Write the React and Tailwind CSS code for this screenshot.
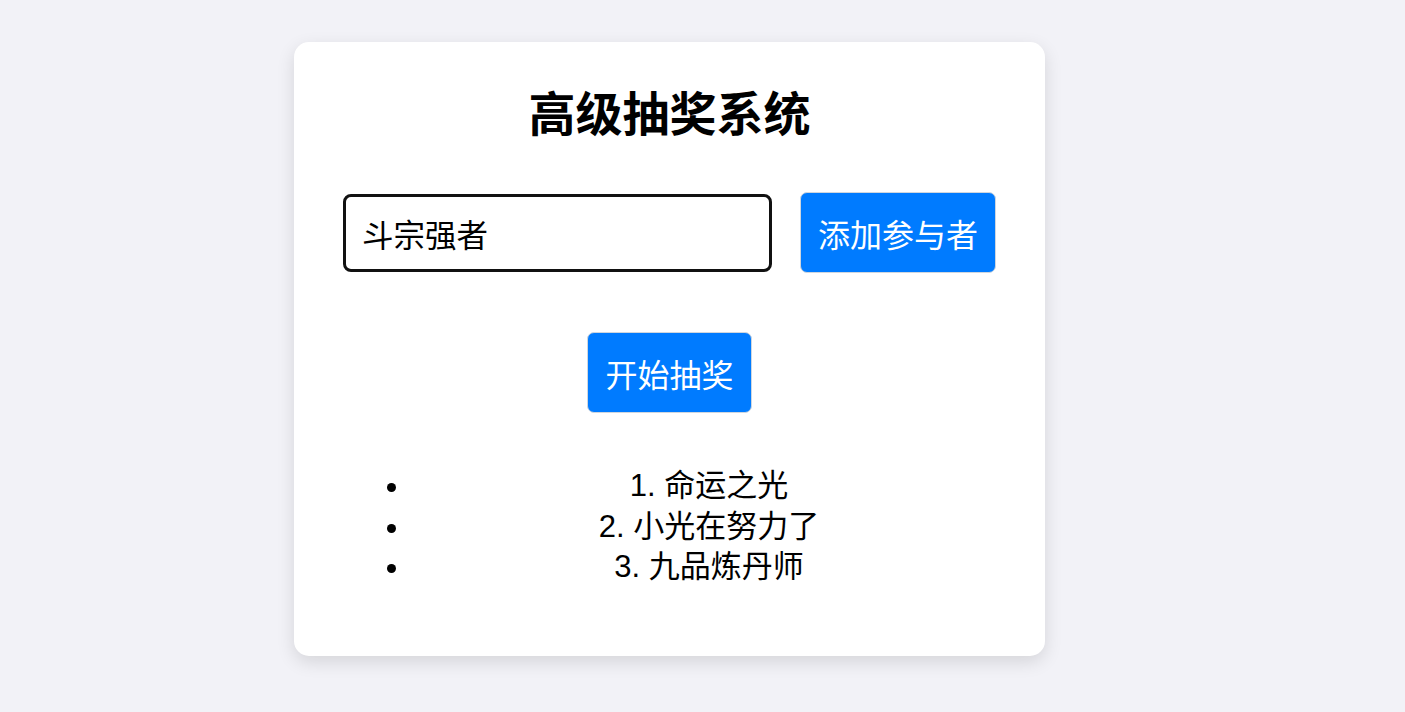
import { useState } from 'react';

const App = () => {
  const [name, setName] = useState('斗宗强者');
  const [winners] = useState(['命运之光', '小光在努力了', '九品炼丹师']);

  return (
    <div
      className="min-h-screen bg-[#f2f2f7] pt-[42px] pb-10"
      style={{ fontFamily: '"Liberation Sans", "Noto Sans CJK SC", sans-serif' }}
    >
      <div className="ml-[294px] w-[751px] bg-white rounded-[15px] shadow-[0_6px_18px_rgba(0,0,0,0.12)] px-[49px] pt-[45px] pb-[68px]">
        {/* Title */}
        <h1 className="text-center text-[47px] leading-[56px] font-bold text-black mb-[49px]">
          高级抽奖系统
        </h1>

        {/* Add participant */}
        <div className="flex items-center justify-center gap-[28px] h-[81px]">
          <input
            value={name}
            onChange={(e) => setName(e.target.value)}
            className="w-[429px] h-[78px] border-[3px] border-[#111111] rounded-[8px] px-[16px] text-[31.5px] text-black outline-none"
          />
          <button className="h-[81px] px-[17px] pt-[7px] bg-[#007bff] text-white text-[32px] rounded-[7px] border border-[#cfd6de]">
            添加参与者
          </button>
        </div>

        {/* Start */}
        <div className="flex justify-center mt-[59px]">
          <button className="h-[81px] px-[17px] pt-[7px] bg-[#007bff] text-white text-[32px] rounded-[7px] border border-[#cfd6de]">
            开始抽奖
          </button>
        </div>

        {/* Winners */}
        <ul className="list-disc mt-[53px] pl-[69px] mr-[-10px] text-center text-[31px] leading-[40.5px] text-black">
          {winners.map((w, i) => (
            <li key={w}>
              {i + 1}. {w}
            </li>
          ))}
        </ul>
      </div>
    </div>
  );
};

export default App;
